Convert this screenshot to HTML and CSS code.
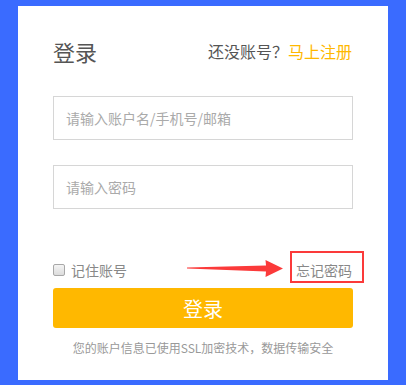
FILE: index.html
```html
<!DOCTYPE html>
<html lang="zh">
<head>
<meta charset="utf-8">
<title>登录</title>
<link rel="stylesheet" href="styles.css">
</head>
<body>
<div class="card">
  <div class="header">
    <h1 class="title">登录</h1>
    <div class="signup">还没账号？<a class="signup-link" href="#">马上注册</a></div>
  </div>
  <form class="form">
    <input class="field" type="text" placeholder="请输入账户名/手机号/邮箱">
    <input class="field field-second" type="password" placeholder="请输入密码">
    <div class="options">
      <label class="remember"><span class="check"></span><span class="remember-text">记住账号</span></label>
      <a class="forgot" href="#">忘记密码</a>
      <span class="mark-box"></span>
      <svg class="mark-arrow" width="98" height="21" viewBox="0 0 98 21"><path d="M1 9.6 L80 7.6 L79.5 2 L97 10.5 L79.5 19 L80 13.6 L1 10.6 Z" fill="#fb3a3a"/></svg>
    </div>
    <button class="submit" type="button">登录</button>
  </form>
  <p class="note">您的账户信息已使用SSL加密技术，数据传输安全</p>
</div>
</body>
</html>
```
FILE: styles.css
```css
html, body {
  margin: 0;
  height: 100%;
}
body {
  background: #3a6bff;
  padding: 6px 18px 5px 18px;
  box-sizing: border-box;
  font-family: "Noto Sans CJK SC", "Microsoft YaHei", "Noto Sans", sans-serif;
}
.card {
  width: 370px;
  height: 374px;
  background: #fff;
  box-sizing: border-box;
  padding: 30px 35px 0 35px;
}
.header {
  display: flex;
  justify-content: space-between;
  align-items: center;
  height: 30px;
}
.title {
  margin: 0;
  font-size: 22px;
  line-height: 30px;
  font-weight: normal;
  color: #555;
}
.signup {
  font-size: 16px;
  line-height: 30px;
  color: #555;
  margin-right: 1px;
}
.signup-link {
  color: #ffb800;
  text-decoration: none;
}
.form {
  margin: 30px 0 0 0;
  display: flex;
  flex-direction: column;
}
.field {
  display: block;
  width: 300px;
  height: 44px;
  box-sizing: border-box;
  border: 1px solid #d6d6d6;
  padding: 0 12px;
  margin: 0;
  font-family: inherit;
  font-size: 14px;
  color: #555;
  outline: none;
}
.field::placeholder {
  color: #aaa;
}
.field-second {
  margin-top: 25px;
}
.options {
  position: relative;
  margin-top: 49px;
  height: 24px;
  display: flex;
  justify-content: space-between;
  align-items: center;
}
.remember {
  display: flex;
  align-items: center;
  font-size: 14px;
  color: #888;
}
.check {
  width: 12px;
  height: 12px;
  box-sizing: border-box;
  border: 1px solid #a8a8a8;
  border-radius: 2px;
  background: linear-gradient(#f4f4f4, #dcdcdc);
}
.remember-text {
  margin-left: 6px;
}
.forgot {
  font-size: 14px;
  color: #888;
  text-decoration: none;
  margin-right: 1px;
}
.mark-box {
  position: absolute;
  left: 237px;
  top: -7px;
  width: 74px;
  height: 32px;
  box-sizing: border-box;
  border: 2px solid #fb3a3a;
}
.mark-arrow {
  position: absolute;
  left: 133px;
  top: 0px;
}
.submit {
  margin-top: 6px;
  height: 40px;
  width: 300px;
  border: none;
  border-radius: 3px;
  background: #ffb800;
  color: #fff;
  font-family: inherit;
  font-size: 20px;
  padding: 0;
}
.note {
  margin: 10px 0 0 0;
  font-size: 12px;
  line-height: 20px;
  color: #999;
  text-align: center;
}
```
